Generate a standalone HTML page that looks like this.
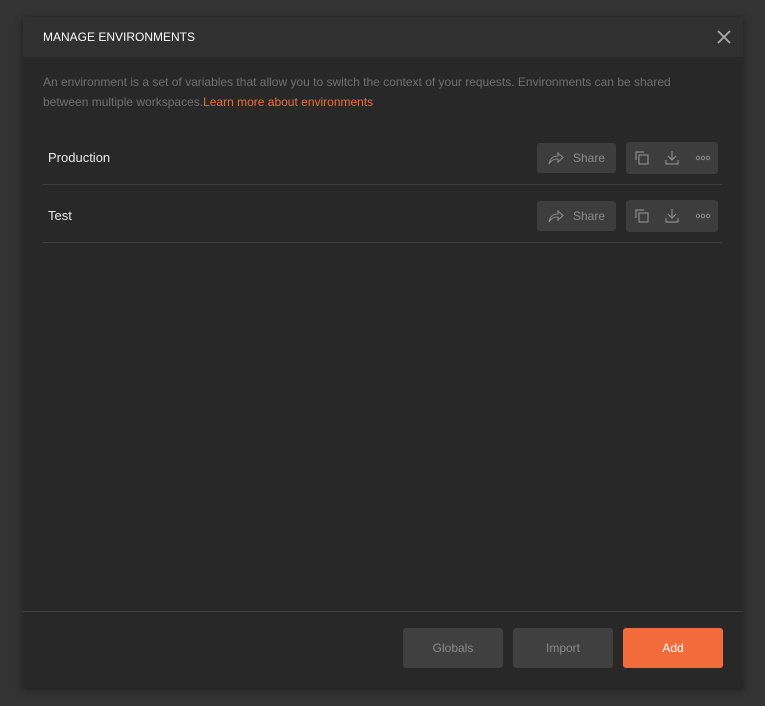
<!DOCTYPE html>
<html><head><style>
body{margin:0;width:765px;height:706px;background:#333;font-family:"Liberation Sans",sans-serif;position:relative;overflow:hidden}
.m{position:absolute;left:23px;top:17px;width:720px;height:671px;background:#282828;box-shadow:0 2px 8px rgba(0,0,0,.4)}
.h{height:40px;background:#303030;color:#fff;font-size:12px;line-height:40px;padding-left:20px}
.x{position:absolute;right:12px;top:13px}
.d{position:absolute;left:20px;top:55px;width:670px;font-size:12px;line-height:20px;color:#707070}
.d a{color:#f26b3a}
.row{position:absolute;left:20px;width:679px;height:58px;border-bottom:1px solid #3d3d3d;color:#e8e8e8;font-size:13px}
.row .n{position:absolute;left:5px;top:24px}
.sh{position:absolute;left:494px;top:17px;width:79px;height:30px;background:#3d3d3d;border-radius:3px;color:#8a8a8a;font-size:12px}
.sh span{position:absolute;left:36px;top:8px}
.ic{position:absolute;left:583px;top:16px;width:92px;height:32px;background:#3d3d3d;border-radius:3px}
.ft{position:absolute;left:0;top:594px;width:720px;border-top:1px solid #3d3d3d}
.b{position:absolute;top:611px;width:100px;height:40px;border-radius:3px;background:#404040;color:#8a8a8a;font-size:12px;text-align:center;line-height:40px}
</style></head><body>
<div class="m">
<div class="h">MANAGE ENVIRONMENTS</div>
<svg class="x" width="14" height="14" viewBox="0 0 14 14"><path d="M1 1L13 13M13 1L1 13" stroke="#aaa" stroke-width="1.8"/></svg>
<div class="d">An environment is a set of variables that allow you to switch the context of your requests. Environments can be shared between multiple workspaces.<a>Learn more about environments</a></div>
<div class="row" style="top:109px"><div class="n">Production</div>
<div class="sh"><svg style="position:absolute;left:11px;top:8px" width="16" height="14" viewBox="0 0 16 14"><path d="M1 13C2 7 6 5 10 5V2l5 4.5-5 4.5V8C6 8 3 9 1 13z" fill="none" stroke="#8a8a8a" stroke-width="1.1"/></svg><span>Share</span></div>
<div class="ic"><svg width="92" height="32" viewBox="0 0 92 32"><g fill="none" stroke="#8a8a8a" stroke-width="1.2"><path d="M10 18V10h8"/><rect x="13" y="13" width="9" height="9"/><path d="M46 9v9M42 14l4 4 4-4M40 18v4h12v-4"/></g><g fill="none" stroke="#8a8a8a"><circle cx="72" cy="16" r="1.7"/><circle cx="77" cy="16" r="1.7"/><circle cx="82" cy="16" r="1.7"/></g></svg></div></div>
<div class="row" style="top:167px"><div class="n">Test</div>
<div class="sh"><svg style="position:absolute;left:11px;top:8px" width="16" height="14" viewBox="0 0 16 14"><path d="M1 13C2 7 6 5 10 5V2l5 4.5-5 4.5V8C6 8 3 9 1 13z" fill="none" stroke="#8a8a8a" stroke-width="1.1"/></svg><span>Share</span></div>
<div class="ic"><svg width="92" height="32" viewBox="0 0 92 32"><g fill="none" stroke="#8a8a8a" stroke-width="1.2"><path d="M10 18V10h8"/><rect x="13" y="13" width="9" height="9"/><path d="M46 9v9M42 14l4 4 4-4M40 18v4h12v-4"/></g><g fill="none" stroke="#8a8a8a"><circle cx="72" cy="16" r="1.7"/><circle cx="77" cy="16" r="1.7"/><circle cx="82" cy="16" r="1.7"/></g></svg></div></div>
<div class="ft"></div>
<div class="b" style="left:380px">Globals</div>
<div class="b" style="left:490px">Import</div>
<div class="b" style="left:600px;background:#f26b3a;color:#fff">Add</div>
</div>
</body></html>
